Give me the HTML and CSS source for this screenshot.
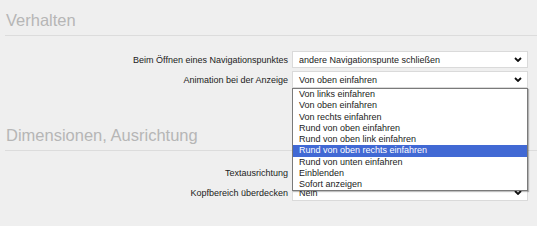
FILE: index.html
```html
<!DOCTYPE html>
<html lang="de">
<head>
<meta charset="utf-8">
<title>Einstellungen</title>
<link rel="stylesheet" href="styles.css">
</head>
<body>
<section class="section first">
  <h2 class="heading">Verhalten</h2>
  <div class="form">
    <label class="label">Beim Öffnen eines Navigationspunktes</label>
    <div class="select"><span class="value">andere Navigationspunte schließen</span><svg class="chev" viewBox="0 0 8 5" width="8" height="5"><path d="M1 1 L4 4 L7 1" fill="none" stroke="#111" stroke-width="1.8"/></svg></div>
    <label class="label">Animation bei der Anzeige</label>
    <div class="select open"><span class="value">Von oben einfahren</span><svg class="chev" viewBox="0 0 8 5" width="8" height="5"><path d="M1 1 L4 4 L7 1" fill="none" stroke="#111" stroke-width="1.8"/></svg>
      <ul class="list">
        <li>Von links einfahren</li>
        <li>Von oben einfahren</li>
        <li>Von rechts einfahren</li>
        <li>Rund von oben einfahren</li>
        <li>Rund von oben link einfahren</li>
        <li class="active">Rund von oben rechts einfahren</li>
        <li>Rund von unten einfahren</li>
        <li>Einblenden</li>
        <li>Sofort anzeigen</li>
      </ul>
    </div>
  </div>
</section>
<section class="section second">
  <h2 class="heading">Dimensionen, Ausrichtung</h2>
  <div class="form tight">
    <label class="label">Textausrichtung</label>
    <div class="select"><span class="value"></span><svg class="chev" viewBox="0 0 8 5" width="8" height="5"><path d="M1 1 L4 4 L7 1" fill="none" stroke="#111" stroke-width="1.8"/></svg></div>
    <label class="label">Kopfbereich überdecken</label>
    <div class="select"><span class="value">Nein</span><svg class="chev" viewBox="0 0 8 5" width="8" height="5"><path d="M1 1 L4 4 L7 1" fill="none" stroke="#111" stroke-width="1.8"/></svg></div>
  </div>
</section>
</body>
</html>
```
FILE: styles.css
```css
html, body {
  margin: 0;
  padding: 0;
}
body {
  background: #efefef;
  font-family: "Liberation Sans", Arial, sans-serif;
  color: #333;
  width: 537px;
  height: 226px;
  overflow: hidden;
}
.section {
  padding-left: 5px;
}
.section.first {
  padding-top: 10px;
}
.section.second {
  margin-top: 37px;
}
.heading {
  margin: 0;
  font-weight: normal;
  font-size: 16.5px;
  line-height: 20px;
  color: #b6b6b6;
  padding: 0 0 5px 1px;
  border-bottom: 1px solid #dcdcdc;
}
.form {
  display: grid;
  grid-template-columns: 283px 236px;
  column-gap: 4px;
  row-gap: 3px;
  margin-top: 15px;
  align-items: center;
}
.form.tight {
  margin-top: 13px;
}
.label {
  text-align: right;
  font-size: 9px;
  color: #222;
  white-space: nowrap;
}
.select {
  position: relative;
  height: 17px;
  box-sizing: border-box;
  background: #fff;
  border: 1px solid #dadada;
  display: flex;
  align-items: center;
  justify-content: space-between;
  padding: 0 4px 0 6px;
  font-size: 9px;
  color: #222;
}
.chev {
  display: block;
  margin-right: 1px;
}
.list {
  position: absolute;
  left: -1px;
  top: 16px;
  width: 236px;
  box-sizing: border-box;
  margin: 0;
  padding: 0;
  list-style: none;
  background: #fff;
  border: 1px solid #7a7a7a;
  box-shadow: 1px 1px 1px rgba(0, 0, 0, 0.25);
  z-index: 5;
}
.list li {
  height: 11.25px;
  line-height: 11.25px;
  padding-left: 6px;
  font-size: 9px;
  color: #222;
  white-space: nowrap;
}
.list li.active {
  background: #4169d4;
  color: #fff;
}
```
